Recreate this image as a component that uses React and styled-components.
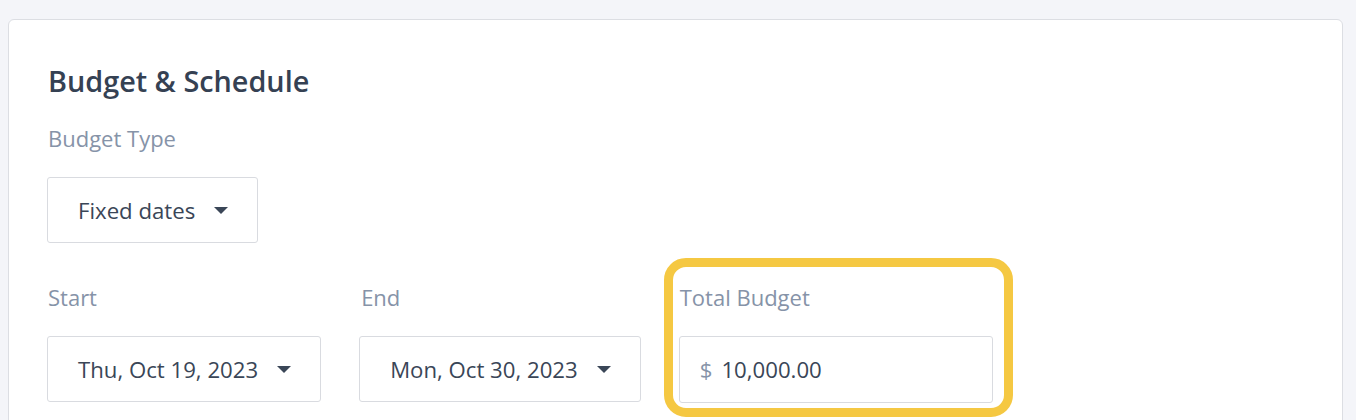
import React from "react";
import styled, { createGlobalStyle } from "styled-components";

const GlobalStyle = createGlobalStyle`
  html, body {
    margin: 0;
    padding: 0;
    background: #f4f5f9;
    font-family: "Open Sans", "Liberation Sans", sans-serif;
    overflow: hidden;
  }
`;

const Page = styled.div`
  padding: 19px 13px 0 8px;
`;

const Card = styled.section`
  background: #ffffff;
  border: 1px solid #dcdee3;
  border-radius: 6px;
  padding: 43px 38px 60px 38px;
`;

const Title = styled.h2`
  margin: 0 0 26px 1px;
  font-size: 28.8px;
  line-height: 36px;
  font-weight: 600;
  color: #354153;
`;

const Label = styled.div`
  font-size: 22px;
  line-height: 27px;
  color: #8693a8;
  padding-left: ${(p) => p.$inset || 0}px;
  margin-bottom: 25px;
`;

const Field = styled.div`
  position: relative;
  display: flex;
  flex-direction: column;
  align-items: flex-start;
  width: ${(p) => (p.$width ? `${p.$width}px` : "auto")};

  ${(p) =>
    p.$highlight &&
    `
    &::after {
      content: "";
      position: absolute;
      left: -15px;
      right: -20px;
      top: -26px;
      bottom: -14px;
      border: 9px solid #f5c842;
      border-radius: 22px;
      pointer-events: none;
    }
  `}
`;

const Row = styled.div`
  display: flex;
  gap: 38px;
  margin-top: 41px;
`;

const Select = styled.div`
  display: inline-flex;
  align-items: center;
  gap: 19px;
  height: 66px;
  box-sizing: border-box;
  padding: 0 29px 0 30px;
  border: 1px solid #d9dbe0;
  border-radius: 3px;
  background: #fff;
  font-size: 22.2px;
  color: #3a4657;
`;

const Input = styled.div`
  display: flex;
  align-items: center;
  width: 100%;
  height: 67px;
  box-sizing: border-box;
  padding: 0 20px;
  border: 1px solid #d9dbe0;
  border-radius: 3px;
  background: #fff;
  font-size: 22.2px;
  color: #3a4657;
`;

const Currency = styled.span`
  color: #8693a8;
  margin-right: 9px;
`;

const Caret = () => (
  <svg width="14" height="7" viewBox="0 0 14 7" aria-hidden="true">
    <path d="M0 0 H14 L7 7 Z" fill="#3a4657" />
  </svg>
);

const Dropdown = ({ value }) => (
  <Select>
    <span>{value}</span>
    <Caret />
  </Select>
);

const App = () => {
  return (
    <Page>
      <GlobalStyle />
      <Card>
        <Title>Budget &amp; Schedule</Title>
        <Field>
          <Label $inset={1}>Budget Type</Label>
          <Dropdown value="Fixed dates" />
        </Field>
        <Row>
          <Field>
            <Label $inset={1}>Start</Label>
            <Dropdown value="Thu, Oct 19, 2023" />
          </Field>
          <Field>
            <Label $inset={2}>End</Label>
            <Dropdown value="Mon, Oct 30, 2023" />
          </Field>
          <Field $width={314} $highlight>
            <Label $inset={1}>Total Budget</Label>
            <Input>
              <Currency>$</Currency>
              <span>10,000.00</span>
            </Input>
          </Field>
        </Row>
      </Card>
    </Page>
  );
};

export default App;
